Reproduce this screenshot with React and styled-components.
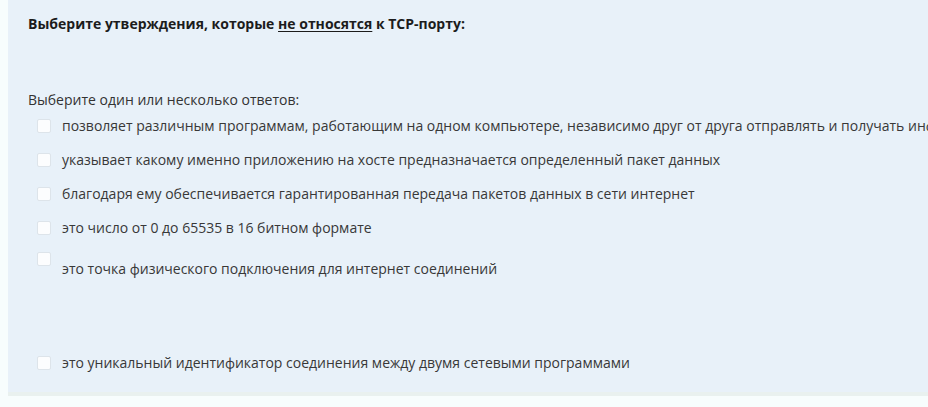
import React from "react";
import styled, { createGlobalStyle } from "styled-components";

const GlobalStyle = createGlobalStyle`
  html, body {
    margin: 0;
    padding: 0;
    background: #f7fdfd;
    overflow: hidden;
  }
  body {
    font-family: "Open Sans", "Noto Sans", sans-serif;
  }
`;

const options = [
  { text: "позволяет различным программам, работающим на одном компьютере, независимо друг от друга отправлять и получать информацию" },
  { text: "указывает какому именно приложению на хосте предназначается определенный пакет данных" },
  { text: "благодаря ему обеспечивается гарантированная передача пакетов данных в сети интернет" },
  { text: "это число от 0 до 65535 в 16 битном формате" },
  { text: "это точка физического подключения для интернет соединений", tall: true },
  { text: "это уникальный идентификатор соединения между двумя сетевыми программами" },
];

const Page = () => {
  return (
    <Wrapper>
      <GlobalStyle />
      <Panel>
        <Question>
          Выберите утверждения, которые <u>не относятся</u> к TCP-порту:
        </Question>
        <Prompt>Выберите один или несколько ответов:</Prompt>
        <Answers>
          {options.map((o, i) => (
            <Option key={i} $tall={o.tall}>
              <Box />
              <Label $tall={o.tall}>{o.text}</Label>
            </Option>
          ))}
        </Answers>
      </Panel>
    </Wrapper>
  );
};

const Wrapper = styled.div`
  width: 928px;
  height: 407px;
  padding-left: 8px;
  box-sizing: border-box;
  overflow: hidden;
`;

const Panel = styled.div`
  width: 940px;
  height: 396px;
  background: #e8f1f9;
  border-bottom: 4px solid #e9f1ef;
  box-sizing: border-box;
  padding: 14px 0 0 20px;
  white-space: nowrap;
`;

const Question = styled.div`
  font-size: 14px;
  font-weight: 700;
  color: #1c1c1c;
  line-height: 20px;
  height: 76px;

  u {
    text-decoration-thickness: 1px;
    text-underline-offset: 2px;
  }
`;

const Prompt = styled.div`
  font-size: 14px;
  color: #333;
  line-height: 20px;
`;

const Answers = styled.div`
  display: flex;
  flex-direction: column;
  padding-left: 9px;
  margin-top: -1px;
`;

const Option = styled.div`
  display: flex;
  align-items: ${(p) => (p.$tall ? "flex-start" : "center")};
  gap: 11px;
  height: ${(p) => (p.$tall ? "110px" : "34px")};
  margin-top: ${(p) => (p.$tall ? "-9px" : "0")};
  ${(p) => (p.$tall ? "padding-top: 16px;" : "")}
  box-sizing: border-box;
`;

const Box = styled.span`
  width: 12px;
  height: 12px;
  flex: none;
  background: #fcfdfe;
  border: 1px solid #dde4ea;
  border-radius: 2px;
`;

const Label = styled.span`
  font-size: 14px;
  color: #383838;
  line-height: 20px;
  ${(p) => (p.$tall ? "margin-top: 7px;" : "")}
`;

export default Page;
